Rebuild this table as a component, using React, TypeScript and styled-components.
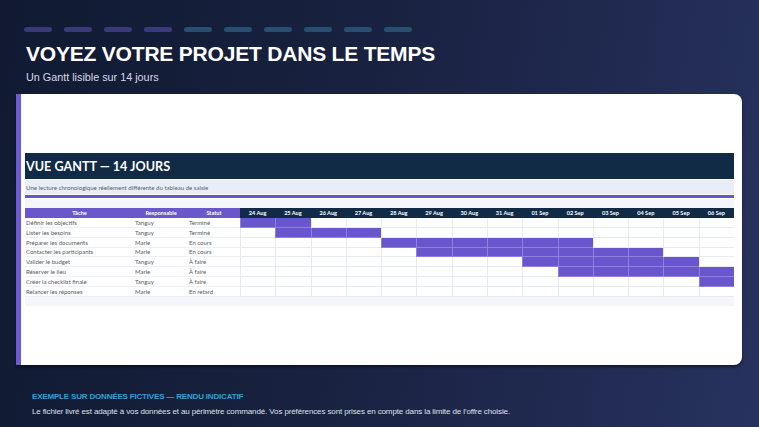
import React from "react";
import styled, { createGlobalStyle } from "styled-components";

const GlobalStyle = createGlobalStyle`
  html, body {
    margin: 0;
    padding: 0;
  }
  body {
    width: 759px;
    height: 427px;
    overflow: hidden;
    font-family: "Liberation Sans", Arial, sans-serif;
  }
`;

const Page = styled.div`
  width: 759px;
  height: 427px;
  box-sizing: border-box;
  padding: 27px 17px 0 16px;
  background: linear-gradient(100deg, #111a32 0%, #18213f 45%, #27325f 100%);
  display: flex;
  flex-direction: column;
`;

const Dashes = styled.div`
  display: flex;
  gap: 12px;
  padding-left: 8px;
`;

const Dash = styled.div<{ $tone: "purple" | "teal" }>`
  width: 28px;
  height: 5px;
  border-radius: 3px;
  background: ${(p) => (p.$tone === "purple" ? "#3a3a78" : "#2a4e70")};
`;

const Title = styled.h1`
  margin: 9px 0 0 10px;
  font-size: 21px;
  line-height: 26px;
  font-weight: 700;
  color: #ffffff;
  letter-spacing: -0.2px;
`;

const Subtitle = styled.div`
  margin: 3px 0 0 10px;
  font-size: 10.8px;
  line-height: 14px;
  color: #d5dae6;
`;

const Card = styled.div`
  margin-top: 10px;
  height: 271px;
  box-sizing: border-box;
  background: #ffffff;
  border-left: 5px solid #6d5bd4;
  border-radius: 0 8px 8px 0;
  box-shadow: 0 2px 3px rgba(0, 0, 0, 0.45);
  padding: 59px 8px 0 4px;
  font-family: Lato, "Open Sans", sans-serif;
`;

const SheetTitle = styled.div`
  height: 26px;
  background: #112a45;
  color: #ffffff;
  font-weight: 700;
  font-size: 12.6px;
  display: flex;
  align-items: center;
  padding-left: 1px;
`;

const SheetSub = styled.div`
  margin-top: 1px;
  height: 14px;
  background: #e8edf6;
  color: #5a6070;
  font-size: 6.1px;
  display: flex;
  align-items: center;
  padding-left: 1px;
`;

const Accent = styled.div`
  margin-top: 1px;
  height: 3px;
  background: #6a56cc;
`;

const Spacer = styled.div`
  margin-top: 1px;
  height: 9px;
  background: #f4f6fb;
`;

const Grid = styled.div`
  display: grid;
  grid-template-columns: 109px 54px 52px repeat(14, 1fr);
  grid-auto-rows: 9.875px;
`;

const HeadCell = styled.div<{ $dark?: boolean }>`
  background: ${(p) => (p.$dark ? "#112a45" : "#6a57cc")};
  color: #ffffff;
  font-weight: 700;
  font-size: 5.6px;
  display: flex;
  align-items: center;
  justify-content: center;
  white-space: nowrap;
`;

const TextCell = styled.div`
  color: #555a66;
  font-size: 6px;
  display: flex;
  align-items: center;
  padding-left: 1px;
  white-space: nowrap;
  border-bottom: 1px solid #edf0f5;
  box-sizing: border-box;
`;

const DayCell = styled.div<{ $on: boolean }>`
  box-sizing: border-box;
  background: ${(p) => (p.$on ? "#6a56cc" : "#ffffff")};
  border-left: 1px solid ${(p) => (p.$on ? "#8e80dc" : "#e6eaf2")};
  border-bottom: 1px solid ${(p) => (p.$on ? "#8e80dc" : "#e6eaf2")};
`;

const FooterRow = styled.div`
  height: 9px;
  background: #f4f6fb;
`;

const Note = styled.div`
  margin: 27px 0 0 16px;
  font-family: "Liberation Sans", Arial, sans-serif;
`;

const NoteTitle = styled.div`
  color: #3a9fd2;
  font-weight: 700;
  font-size: 8px;
  line-height: 10px;
  letter-spacing: -0.18px;
`;

const NoteText = styled.div`
  margin-top: 5px;
  color: #dde1ea;
  font-size: 8px;
  line-height: 10px;
  letter-spacing: -0.12px;
`;

const days = [
  "24 Aug", "25 Aug", "26 Aug", "27 Aug", "28 Aug", "29 Aug", "30 Aug",
  "31 Aug", "01 Sep", "02 Sep", "03 Sep", "04 Sep", "05 Sep", "06 Sep",
];

const tasks = [
  { name: "Définir les objectifs", owner: "Tanguy", status: "Terminé", from: 0, to: 1 },
  { name: "Lister les besoins", owner: "Tanguy", status: "Terminé", from: 1, to: 3 },
  { name: "Préparer les documents", owner: "Marie", status: "En cours", from: 4, to: 9 },
  { name: "Contacter les participants", owner: "Marie", status: "En cours", from: 5, to: 11 },
  { name: "Valider le budget", owner: "Tanguy", status: "À faire", from: 8, to: 12 },
  { name: "Réserver le lieu", owner: "Marie", status: "À faire", from: 9, to: 13 },
  { name: "Créer la checklist finale", owner: "Tanguy", status: "À faire", from: 13, to: 13 },
  { name: "Relancer les réponses", owner: "Marie", status: "En retard", from: -1, to: -1 },
];

const App: React.FC = () => {
  return (
    <>
      <GlobalStyle />
      <Page>
        <Dashes>
          {Array.from({ length: 10 }).map((_, i) => (
            <Dash key={i} $tone={i < 4 ? "purple" : "teal"} />
          ))}
        </Dashes>
        <Title>VOYEZ VOTRE PROJET DANS LE TEMPS</Title>
        <Subtitle>Un Gantt lisible sur 14 jours</Subtitle>

        <Card>
          <SheetTitle>VUE GANTT — 14 JOURS</SheetTitle>
          <SheetSub>Une lecture chronologique réellement différente du tableau de saisie</SheetSub>
          <Accent />
          <Spacer />
          <Grid>
            <HeadCell>Tâche</HeadCell>
            <HeadCell>Responsable</HeadCell>
            <HeadCell>Statut</HeadCell>
            {days.map((d) => (
              <HeadCell key={d} $dark>
                {d}
              </HeadCell>
            ))}
            {tasks.map((t) => (
              <React.Fragment key={t.name}>
                <TextCell>{t.name}</TextCell>
                <TextCell>{t.owner}</TextCell>
                <TextCell>{t.status}</TextCell>
                {days.map((d, i) => (
                  <DayCell key={d} $on={i >= t.from && i <= t.to && t.from >= 0} />
                ))}
              </React.Fragment>
            ))}
          </Grid>
          <FooterRow />
        </Card>

        <Note>
          <NoteTitle>EXEMPLE SUR DONNÉES FICTIVES — RENDU INDICATIF</NoteTitle>
          <NoteText>
            Le fichier livré est adapté à vos données et au périmètre commandé. Vos préférences sont prises en compte dans la limite de l’offre choisie.
          </NoteText>
        </Note>
      </Page>
    </>
  );
};

export default App;
